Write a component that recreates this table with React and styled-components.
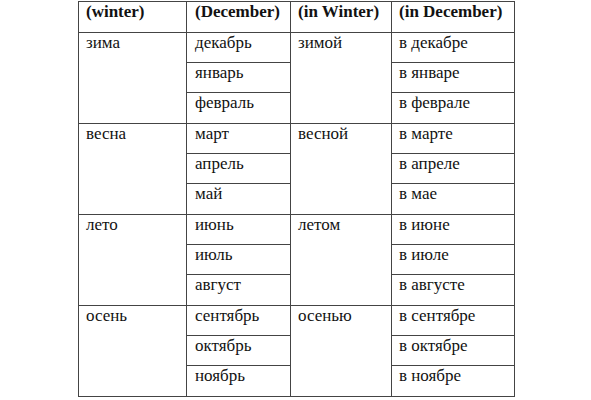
import React from "react";
import styled, { createGlobalStyle } from "styled-components";

const GlobalStyle = createGlobalStyle`
  html, body {
    margin: 0;
    padding: 0;
    background: #ffffff;
  }
  body {
    font-family: "Liberation Serif", "Times New Roman", serif;
  }
`;

const Page = styled.div`
  width: 591px;
  height: 400px;
  padding: 1px 0 0 78px;
  box-sizing: border-box;
  background: #ffffff;
`;

const Table = styled.div`
  display: grid;
  grid-template-columns: 107px 103px 100px 122px;
  grid-template-rows: 30px repeat(4, 29px 29px 30px);
  gap: 1px;
  padding: 1px;
  width: max-content;
  background: #444444;
`;

const Cell = styled.div`
  background: #ffffff;
  color: #121212;
  font-family: "Liberation Serif", "Times New Roman", serif;
  font-size: 17px;
  line-height: 19px;
  font-weight: ${(p) => (p.$head ? 700 : 400)};
  padding: 0 0 0 ${(p) => p.$pad}px;
  grid-row: ${(p) => (p.$span ? `span ${p.$span}` : "auto")};
  white-space: nowrap;
`;

const headers = ["(winter)", "(December)", "(in Winter)", "(in December)"];
const pads = [7, 8, 7, 7];

const seasons = [
  {
    name: "зима",
    inst: "зимой",
    months: [
      ["декабрь", "в декабре"],
      ["январь", "в январе"],
      ["февраль", "в феврале"],
    ],
  },
  {
    name: "весна",
    inst: "весной",
    months: [
      ["март", "в марте"],
      ["апрель", "в апреле"],
      ["май", "в мае"],
    ],
  },
  {
    name: "лето",
    inst: "летом",
    months: [
      ["июнь", "в июне"],
      ["июль", "в июле"],
      ["август", "в августе"],
    ],
  },
  {
    name: "осень",
    inst: "осенью",
    months: [
      ["сентябрь", "в сентябре"],
      ["октябрь", "в октябре"],
      ["ноябрь", "в ноябре"],
    ],
  },
];

export default function App() {
  return (
    <>
      <GlobalStyle />
      <Page>
        <Table>
          {headers.map((h, i) => (
            <Cell key={h} $head $pad={pads[i]}>
              {h}
            </Cell>
          ))}
          {seasons.map((s) => (
            <React.Fragment key={s.name}>
              <Cell $span={3} $pad={pads[0]}>
                {s.name}
              </Cell>
              <Cell $pad={pads[1]}>{s.months[0][0]}</Cell>
              <Cell $span={3} $pad={pads[2]}>
                {s.inst}
              </Cell>
              <Cell $pad={pads[3]}>{s.months[0][1]}</Cell>
              <Cell $pad={pads[1]}>{s.months[1][0]}</Cell>
              <Cell $pad={pads[3]}>{s.months[1][1]}</Cell>
              <Cell $pad={pads[1]}>{s.months[2][0]}</Cell>
              <Cell $pad={pads[3]}>{s.months[2][1]}</Cell>
            </React.Fragment>
          ))}
        </Table>
      </Page>
    </>
  );
}
